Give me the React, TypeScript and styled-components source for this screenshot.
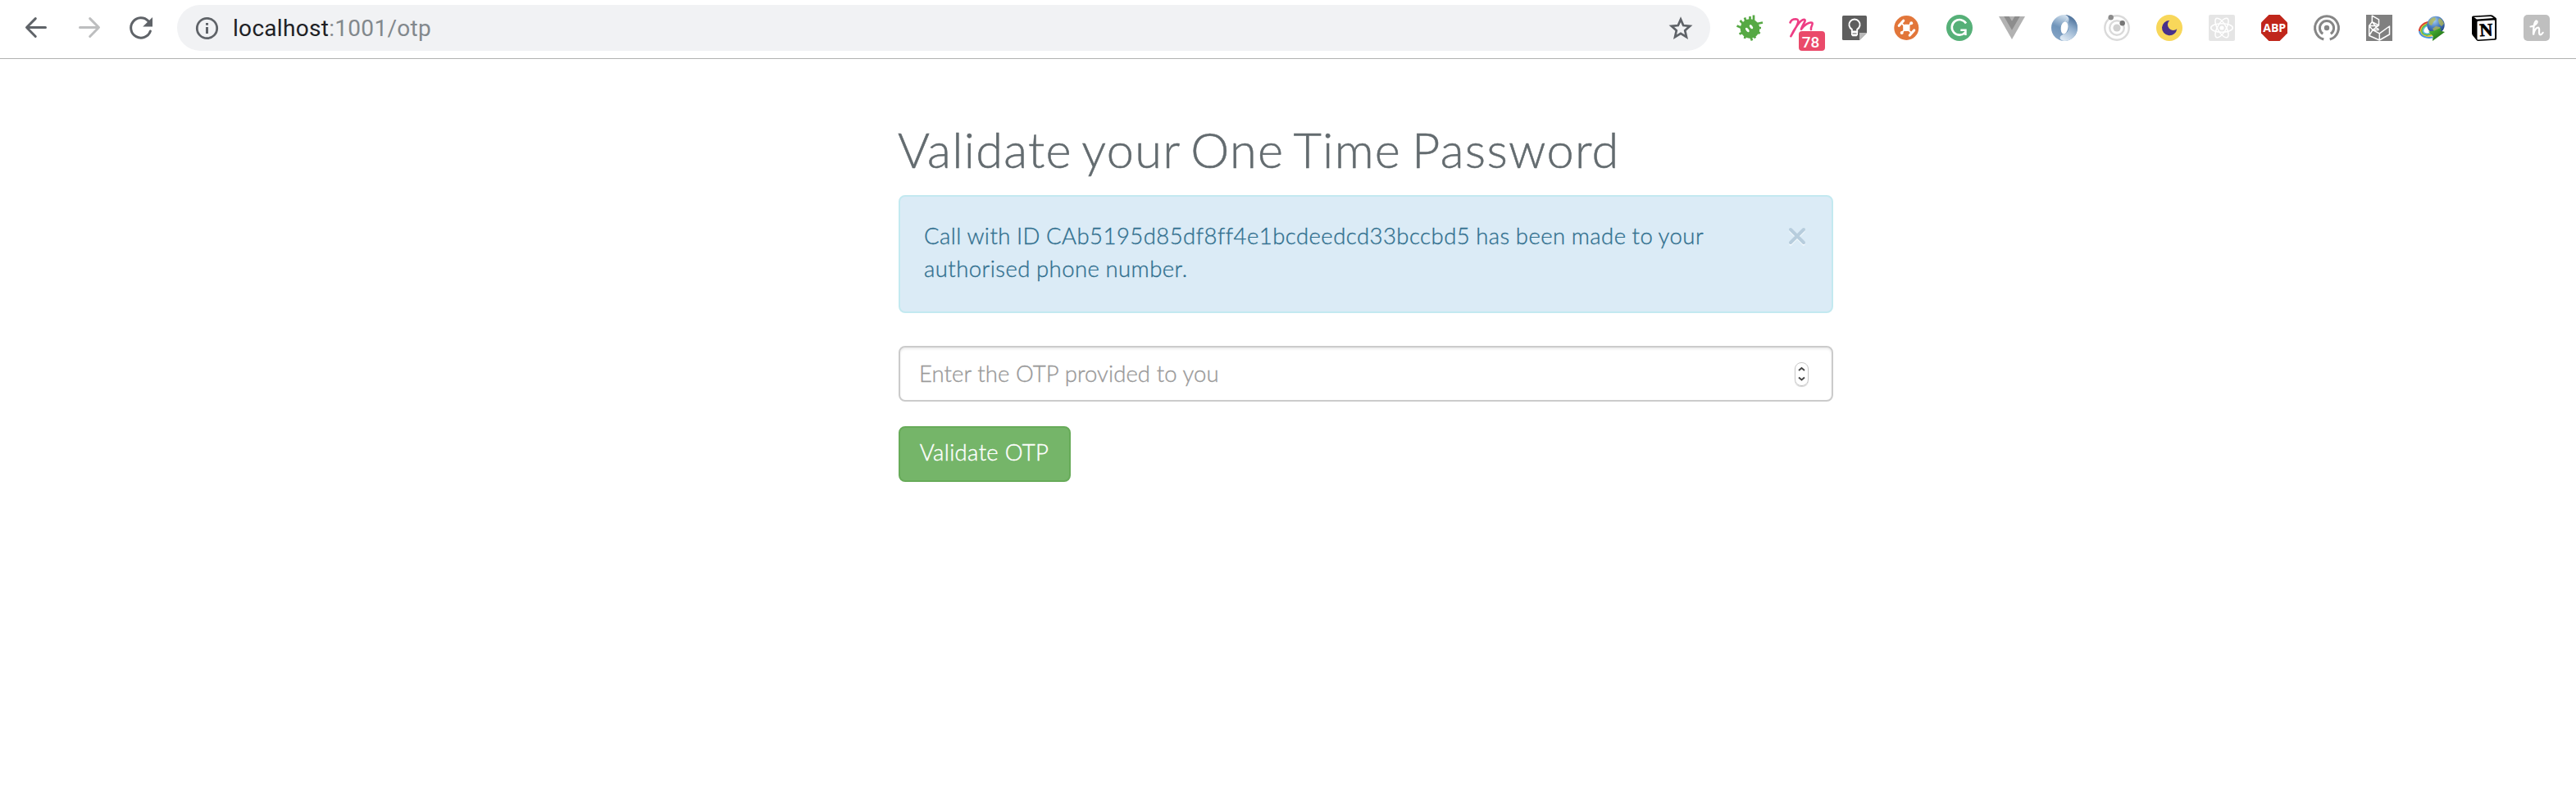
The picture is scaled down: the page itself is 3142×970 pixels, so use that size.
import React from "react";
import styled, { createGlobalStyle } from "styled-components";

const GlobalStyle = createGlobalStyle`
  *, *::before, *::after { box-sizing: border-box; }
  body {
    margin: 0;
    background: #fff;
    font-family: "Lato", sans-serif;
    font-weight: 300;
  }
`;

/* ---------- browser toolbar ---------- */

const Toolbar = styled.header`
  display: flex;
  align-items: flex-start;
  height: 72px;
  padding-top: 6px;
  border-bottom: 1px solid #b1b2b1;
`;

const NavButtons = styled.nav`
  display: flex;
  align-items: center;
  gap: 24px;
  height: 56px;
  padding: 0 24px;
`;

const NavButton = styled.button<{ $faded?: boolean }>`
  width: 40px;
  height: 40px;
  padding: 0;
  border: 0;
  background: none;
  color: ${(p) => (p.$faded ? "#bdbebf" : "#5f6368")};
`;

const AddressBar = styled.div`
  display: flex;
  align-items: center;
  width: 1870px;
  height: 56px;
  padding: 0 19px;
  border-radius: 28px;
  background: #f1f2f4;
  color: #5f6368;
`;

const Url = styled.span`
  flex: 1;
  padding: 1px 0 0 17px;
  font: 400 28px/55px Roboto, sans-serif;
  letter-spacing: 0.3px;
  color: #82888c;
`;

const Host = styled.span`
  color: #202124;
`;

const Extensions = styled.div`
  display: flex;
  gap: 32px;
  padding: 12px 0 0 32px;
`;

const Extension = styled.div`
  position: relative;
  width: 32px;
  height: 32px;
`;

const Glyph = styled.svg`
  display: block;
  overflow: visible;
`;

const Badge = styled.span`
  position: absolute;
  left: 12px;
  top: 20px;
  width: 32px;
  height: 24px;
  border-radius: 4px;
  background: #ea4a6a;
  color: #fff;
  font: 500 19px/27px Roboto, sans-serif;
  text-align: center;
  padding-right: 3px;
`;

/* ---------- page ---------- */

const Page = styled.main`
  width: 1140px;
  margin: 77px 0 0 1096px;
`;

const Title = styled.h2`
  margin: 0 0 23px -1px;
  font-size: 59.5px;
  line-height: 66px;
  font-weight: 300;
  letter-spacing: 1.29px;
  word-spacing: -4.5px;
  white-space: nowrap;
  color: #636b6f;
  -webkit-text-stroke: 0.5px #636b6f;
`;

const Alert = styled.div`
  display: flex;
  justify-content: space-between;
  align-items: flex-start;
  height: 144px;
  padding: 28px 32px 0 29px;
  border: 2px solid #c3e9f0;
  border-radius: 8px;
  background: #dbebf6;
  color: #31708f;
`;

const Message = styled.p`
  margin: 0;
  font-size: 27.5px;
  line-height: 40px;
  letter-spacing: 0.45px;
  word-spacing: -0.8px;
  white-space: nowrap;
  -webkit-text-stroke: 0.35px #31708f;
`;

const CloseButton = styled.button`
  width: 20px;
  height: 22px;
  margin-top: 9px;
  padding: 0;
  border: 0;
  background: none;
`;

const Field = styled.div`
  display: flex;
  align-items: center;
  justify-content: space-between;
  height: 68px;
  margin-top: 40px;
  padding: 0 28px 0 23px;
  border: 2px solid #cbcbcb;
  border-radius: 8px;
  box-shadow: inset 0 2px 3px rgba(0, 0, 0, 0.08);
`;

const Input = styled.input`
  flex: 1;
  height: 60px;
  padding: 0;
  border: 0;
  outline: 0;
  background: none;
  font: 300 27.5px/60px "Lato", sans-serif;
  letter-spacing: 0.1px;
  &::placeholder {
    color: #999;
    opacity: 1;
    -webkit-text-stroke: 0.35px #999;
  }
`;

const Stepper = styled.div`
  display: flex;
  width: 17px;
  height: 29px;
  border: 1px solid #c9c9c9;
  border-radius: 8px;
  box-shadow: 0 1px 1px rgba(0, 0, 0, 0.2);
`;

const SubmitButton = styled.button`
  display: block;
  width: 210px;
  height: 68px;
  margin-top: 30px;
  padding: 0 1px 4px 0;
  border: 2px solid #67ab59;
  border-radius: 8px;
  background: #75b569;
  color: #fff;
  font: 300 27.5px/60px "Lato", sans-serif;
  letter-spacing: 0.35px;
  -webkit-text-stroke: 0.4px #fff;
`;

const line = (w: number) => ({
  fill: "none",
  stroke: "currentColor",
  strokeWidth: w,
  strokeLinecap: "round" as const,
  strokeLinejoin: "round" as const,
});

const Arrow = ({ flip }: { flip?: boolean }) => (
  <Glyph width="40" height="40" viewBox="0 0 40 40">
    <path
      {...line(3)}
      transform={flip ? "matrix(-1 0 0 1 41 0)" : undefined}
      d="M31.5 19.5H8.7M19.3 8.6L8.5 19.5l10.8 11"
    />
  </Glyph>
);

const Reload = () => (
  <Glyph width="40" height="40" viewBox="0 0 40 40">
    <path {...line(3)} d="M31.4 24A12.2 12.2 0 1 1 28.8 11.6" />
    <path d="M34 7v11.6H22.2z" fill="currentColor" />
  </Glyph>
);

const Info = () => (
  <Glyph width="32" height="32" viewBox="0 0 32 32">
    <circle cx="17.5" cy="16.5" r="12.2" {...line(2.8)} />
    <path d="M16 10h3v2.7h-3zM16 15h3v8h-3z" fill="currentColor" />
  </Glyph>
);

const Star = () => (
  <Glyph width="32" height="32" viewBox="0 0 32 32">
    <path
      fill="none"
      stroke="currentColor"
      strokeWidth="2.7"
      d="M15 5.6l3.2 7.5 8 .7-6 5.4 1.8 7.9-7-4.2-7 4.2 1.8-7.9-6-5.4 8-.7z"
    />
  </Glyph>
);

const Svg = ({ children }: { children: React.ReactNode }) => (
  <Glyph width="32" height="32" viewBox="0 0 32 32">
    {children}
  </Glyph>
);

const Bug = () => (
  <Svg>
    <circle cx="16.5" cy="17" r="11.8" fill="#56a944" />
    <path
      d="M8 11L4.5 7M11.5 8L10 3.5M16.5 7V2M21 8V.5M25 11l7-1.500M26 16h4M25.500 20l3 3M21 25l2 3.500M17 26l2 5.500M11 25l-1 4M7 22l-3.500 1.500M6.500 16l-6-2.500"
      stroke="#56a944"
      strokeWidth="2.700"
    />
    <ellipse cx="13.300" cy="18.500" rx="1.600" ry="3.100" transform="rotate(-38 13.3 18.5)" fill="#fff" />
    <ellipse cx="18" cy="14.700" rx="1.600" ry="2.900" transform="rotate(-38 18 14.7)" fill="#fff" />
  </Svg>
);

const ScriptM = () => (
  <Svg>
    <g color="#ee3d84">
      <path
        {...line(2.6)}
        d="M1.500 9.500C2.500 6.500 5.500 5.200 8.500 5.200c6 .3 1.500 8.500-6.200 21C6 18.500 13.500 6 18.500 5.800c3.500.8-2 6-3.600 11.900C18.500 12.500 24.500 8.600 28.200 9.800c2 1.400-2.200 5-1.200 8.200"
      />
    </g>
  </Svg>
);

const Keep = () => (
  <Svg>
    <path d="M2.500 1h27Q31 1 31 2.500V22l-9 9H2.500Q1 31 1 29.500V2.500Q1 1 2.500 1z" fill="#5e5e5e" />
    <path d="M31 22v.5L22.500 31H22v-9z" fill="#b9b9b9" />
    <path
      d="M12.800 20.500v-2.700a6.600 6.600 0 1 1 6.400 0v2.700z"
      fill="none"
      stroke="#fff"
      strokeWidth="1.900"
    />
    <path d="M12 21h8v3.500l-1.500 1.700h-5L12 24.500z" fill="#fff" />
    <path d="M13.500 22.900h5" stroke="#5e5e5e" strokeWidth="1" />
  </Svg>
);

const Hub = () => (
  <Svg>
    <circle cx="15.300" cy="16" r="15" fill="#e2763a" />
    <path d="M8.500 9.300l13.500 13.500M22 9.300L8.500 22.800" stroke="#fff" strokeWidth="1.700" />
    <rect x="11.200" y="11.800" width="8.300" height="8.300" rx="2.500" fill="#fff" />
    <circle cx="21.200" cy="10.300" r="2" fill="#fff" />
    <circle cx="9.700" cy="22" r="2" fill="#fff" />
    <path d="M6.300 13.200l5.400-6M19.300 25l5.400-6" stroke="#fff" strokeWidth="3.200" strokeLinecap="round" />
  </Svg>
);

const Grammarly = () => (
  <Svg>
    <circle cx="16" cy="16" r="16" fill="#56b078" />
    <g color="#fff">
      <path {...line(2.6)} strokeLinecap="butt" d="M24 10.500A9.300 9.300 0 1 0 23 21.500" />
      <path d="M17.300 17.500h7.400V25h-2.600v-5.100h-4.800z" fill="#fff" />
    </g>
  </Svg>
);

const Vue = () => (
  <Svg>
    <path d="M0 2h32L16 30z" fill="#b2b2b2" />
    <path d="M6.300 2h6.200L16 7.800 19.500 2h6.200L16 18.800z" fill="#8d8d8d" />
  </Svg>
);

const Swirl = () => (
  <Svg>
    <defs>
      <linearGradient id="swirlLeft" x1="0.700" y1="0" x2="0.300" y2="1">
        <stop offset="0" stopColor="#e2edf6" />
        <stop offset="0.550" stopColor="#6f94ba" />
        <stop offset="1" stopColor="#86a5c6" />
      </linearGradient>
      <linearGradient id="swirlRight" x1="0.700" y1="0" x2="0.300" y2="1">
        <stop offset="0" stopColor="#3f648f" />
        <stop offset="0.450" stopColor="#8fadcc" />
        <stop offset="1" stopColor="#dfeaf4" />
      </linearGradient>
    </defs>
    <circle cx="16" cy="16" r="16" fill="url(#swirlLeft)" />
    <path d="M16 0A16 16 0 0 1 16 32C9 31 9 25.500 15 24 22 22 22.500 14 20.500 9.500 23 5 21 1 16 0z" fill="url(#swirlRight)" />
    <path d="M16.500 8.200C20.500 5.500 20 1.500 16 .2M15.500 23.800C11 26.500 11.500 30.500 16 31.800" stroke="#d5e3f0" strokeWidth="0.700" fill="none" />
    <ellipse cx="16" cy="16" rx="4.300" ry="7.600" transform="rotate(8 16 16)" fill="#fff" />
  </Svg>
);

const Orbit = () => (
  <Svg>
    <circle cx="16" cy="16" r="14.700" fill="none" stroke="#dadada" strokeWidth="2.400" />
    <circle cx="16" cy="16" r="8.800" fill="none" stroke="#dadada" strokeWidth="2.400" />
    <circle cx="16" cy="16" r="4.600" fill="#d0d0d0" />
    <circle cx="8.700" cy="3.200" r="3.200" fill="#8b8b8b" />
    <circle cx="22.700" cy="10.200" r="3.200" fill="#777" />
  </Svg>
);

const Moon = () => (
  <Svg>
    <circle cx="16" cy="16" r="16" fill="#f8d75a" />
    <path d="M16.300 6.900A9.200 9.200 0 1 0 25.300 17.300 6.300 6.300 0 1 1 16.300 6.900z" fill="#48318b" />
  </Svg>
);

const Atom = () => (
  <Svg>
    <rect width="32" height="32" rx="2" fill="#e5e5e5" />
    <g fill="none" stroke="#fff" strokeWidth="1.500">
      {[0, 60, 120].map((a) => (
        <ellipse key={a} cx="16" cy="16" rx="13.300" ry="5.200" transform={`rotate(${a} 16 16)`} />
      ))}
    </g>
    <circle cx="16" cy="16" r="2.600" fill="#fff" />
  </Svg>
);

const AdBlock = () => (
  <Svg>
    <path d="M9.400 0h13.200L32 9.400v13.200L22.600 32H9.400L0 22.600V9.400z" fill="#c0261b" />
    <text x="16.200" y="21" textAnchor="middle" fill="#fff" fontFamily="Open Sans, sans-serif" fontWeight="700" fontSize="14.500" textLength="28" lengthAdjust="spacingAndGlyphs">
      ABP
    </text>
  </Svg>
);

const Podcast = () => (
  <Svg>
    <g color="#868686">
      <path {...line(3)} strokeLinecap="butt" d="M12.300 30A14.400 14.400 0 1 1 19.700 30" />
      <path {...line(3)} strokeLinecap="butt" d="M11.200 23.300A8.600 8.600 0 1 1 20.800 23.300" />
      <circle cx="16" cy="16" r="3.200" fill="currentColor" />
    </g>
  </Svg>
);

const Wireframe = () => (
  <Svg>
    <rect width="32" height="32" fill="#808080" />
    <path
      d="M7.300 1.200l8.200 4.600v7L7.300 8.700zM7.300 8.700L3.700 13.500 8 18.500l7.500-5.700M3.700 13.500h10M7.300 8.700l8.200 9.800M3.700 13.500V25.500L16.300 31 28.500 24V14L16.300 22.800 8 18.500M15.500 18.500L8 18.500l-4.300 7M16.300 22.800V31"
      fill="none"
      stroke="#fff"
      strokeWidth="1.500"
      strokeLinejoin="round"
    />
  </Svg>
);

const Globe = () => (
  <Svg>
    <defs>
      <radialGradient id="globeSea" cx="0.400" cy="0.250" r="0.800">
        <stop offset="0" stopColor="#a9d0f5" />
        <stop offset="0.500" stopColor="#4a7cc0" />
        <stop offset="1" stopColor="#1f3f78" />
      </radialGradient>
      <linearGradient id="globeArrow" x1="0" y1="0" x2="1" y2="1">
        <stop offset="0" stopColor="#54c83a" />
        <stop offset="1" stopColor="#14590f" />
      </linearGradient>
    </defs>
    <g fill="none" strokeWidth="2">
      <ellipse cx="12" cy="18" rx="7" ry="5" stroke="#58b9dd" transform="rotate(-25 12 18)" />
      <ellipse cx="12" cy="18" rx="8.700" ry="6.600" stroke="#5dbb46" transform="rotate(-25 12 18)" />
      <ellipse cx="12" cy="18" rx="10.300" ry="8.200" stroke="#f0c63a" transform="rotate(-25 12 18)" />
      <path d="M16 8.500C7 8.500 .8 14 1 20" stroke="#d8432f" />
      <path d="M1 20c1 6 8 9 16 7.500" stroke="#4b93dc" />
    </g>
    <circle cx="21" cy="12.500" r="10.700" fill="url(#globeSea)" />
    <path d="M12 9c2-4 5-6 8-6l1 3-3 3-2 4-3-1zM25 4c3 1 5 4 6 7l-3 3-3-3-1-4zM17 17l4-3 5 1 1 4-7 3z" fill="#b5b94b" opacity="0.750" />
    <path d="M12 20.500l7-1 8-3.500-.5 3.500L32 21 17 32l.5-6z" fill="url(#globeArrow)" />
  </Svg>
);

const Notion = () => (
  <Svg>
    <path d="M1 3.200Q1 1.700 2.500 1.600L24 .2q1.300-.1 2.300.6l4 2.900q.8.600.8 1.700V29q0 1.700-1.700 1.800L9 32q-1.500.1-2.300-.9L1.800 25Q1 24 1 22.600z" fill="#000" />
    <path d="M3.700 3.100L24.200 1.900l3.300 2.200-19.700 1.300q-.9 0-1.600-.5zM7.500 8.900q0-1.100 1.100-1.200L28 6.500q1.100 0 1.100 1v20.700q0 1-1 1.100L8.700 30.400q-1.200.1-1.200-1.200z" fill="#fff" />
    <text x="18.300" y="25.800" textAnchor="middle" fontFamily="Liberation Serif, serif" fontWeight="700" fontSize="22" textLength="16" lengthAdjust="spacingAndGlyphs" stroke="#000" strokeWidth="0.700" transform="rotate(-3 18 18)">
      N
    </text>
  </Svg>
);

const Honey = () => (
  <Svg>
    <rect width="32" height="32" rx="5" fill="#bfbfbf" />
    <path
      d="M8.500 14.500C12.500 14.500 17.500 10.500 16.500 8 14.500 5.500 11.800 12 12 24.500 13 18.500 15.800 15 18 15.600c2.800 1-.5 7.200 2 8.700 1.600.5 2.800-1 3.700-2.500"
      fill="none"
      stroke="#fff"
      strokeWidth="2.200"
      strokeLinecap="round"
    />
  </Svg>
);

const extensions: { name: string; Icon: React.FC; badge?: string }[] = [
  { name: "bug", Icon: Bug },
  { name: "momentum", Icon: ScriptM, badge: "78" },
  { name: "keep", Icon: Keep },
  { name: "hub", Icon: Hub },
  { name: "grammar", Icon: Grammarly },
  { name: "vue", Icon: Vue },
  { name: "swirl", Icon: Swirl },
  { name: "orbit", Icon: Orbit },
  { name: "moon", Icon: Moon },
  { name: "atom", Icon: Atom },
  { name: "adblock", Icon: AdBlock },
  { name: "podcast", Icon: Podcast },
  { name: "wireframe", Icon: Wireframe },
  { name: "globe", Icon: Globe },
  { name: "notion", Icon: Notion },
  { name: "honey", Icon: Honey },
];

export default function App() {
  return (
    <>
      <GlobalStyle />
      <Toolbar>
        <NavButtons>
          <NavButton aria-label="Back">
            <Arrow />
          </NavButton>
          <NavButton aria-label="Forward" $faded>
            <Arrow flip />
          </NavButton>
          <NavButton aria-label="Reload">
            <Reload />
          </NavButton>
        </NavButtons>
        <AddressBar>
          <Info />
          <Url>
            <Host>localhost</Host>:1001/otp
          </Url>
          <Star />
        </AddressBar>
        <Extensions>
          {extensions.map(({ name, Icon, badge }) => (
            <Extension key={name}>
              <Icon />
              {badge && <Badge>{badge}</Badge>}
            </Extension>
          ))}
        </Extensions>
      </Toolbar>
      <Page>
        <Title>Validate your One Time Password</Title>
        <Alert>
          <Message>
            Call with ID CAb5195d85df8ff4e1bcdeedcd33bccbd5 has been made to your
            <br />
            authorised phone number.
          </Message>
          <CloseButton aria-label="Close">
            <Glyph width="20" height="22" viewBox="0 0 20 22">
              <path d="M2 5l16 16M18 5L2 21" stroke="#f2f8fc" strokeWidth="3.200" strokeLinecap="round" />
              <path d="M2 3l16 16M18 3L2 19" stroke="#b7cddd" strokeWidth="4" strokeLinecap="round" />
            </Glyph>
          </CloseButton>
        </Alert>
        <Field>
          <Input placeholder="Enter the OTP provided to you" />
          <Stepper>
            <Glyph width="15" height="27" viewBox="0 0 15 27">
              <path d="M4 9l3.500-3L11 9M4 17.500l3.500 3 3.500-3" fill="none" stroke="#444" strokeWidth="1.900" />
            </Glyph>
          </Stepper>
        </Field>
        <SubmitButton>Validate OTP</SubmitButton>
      </Page>
    </>
  );
}
